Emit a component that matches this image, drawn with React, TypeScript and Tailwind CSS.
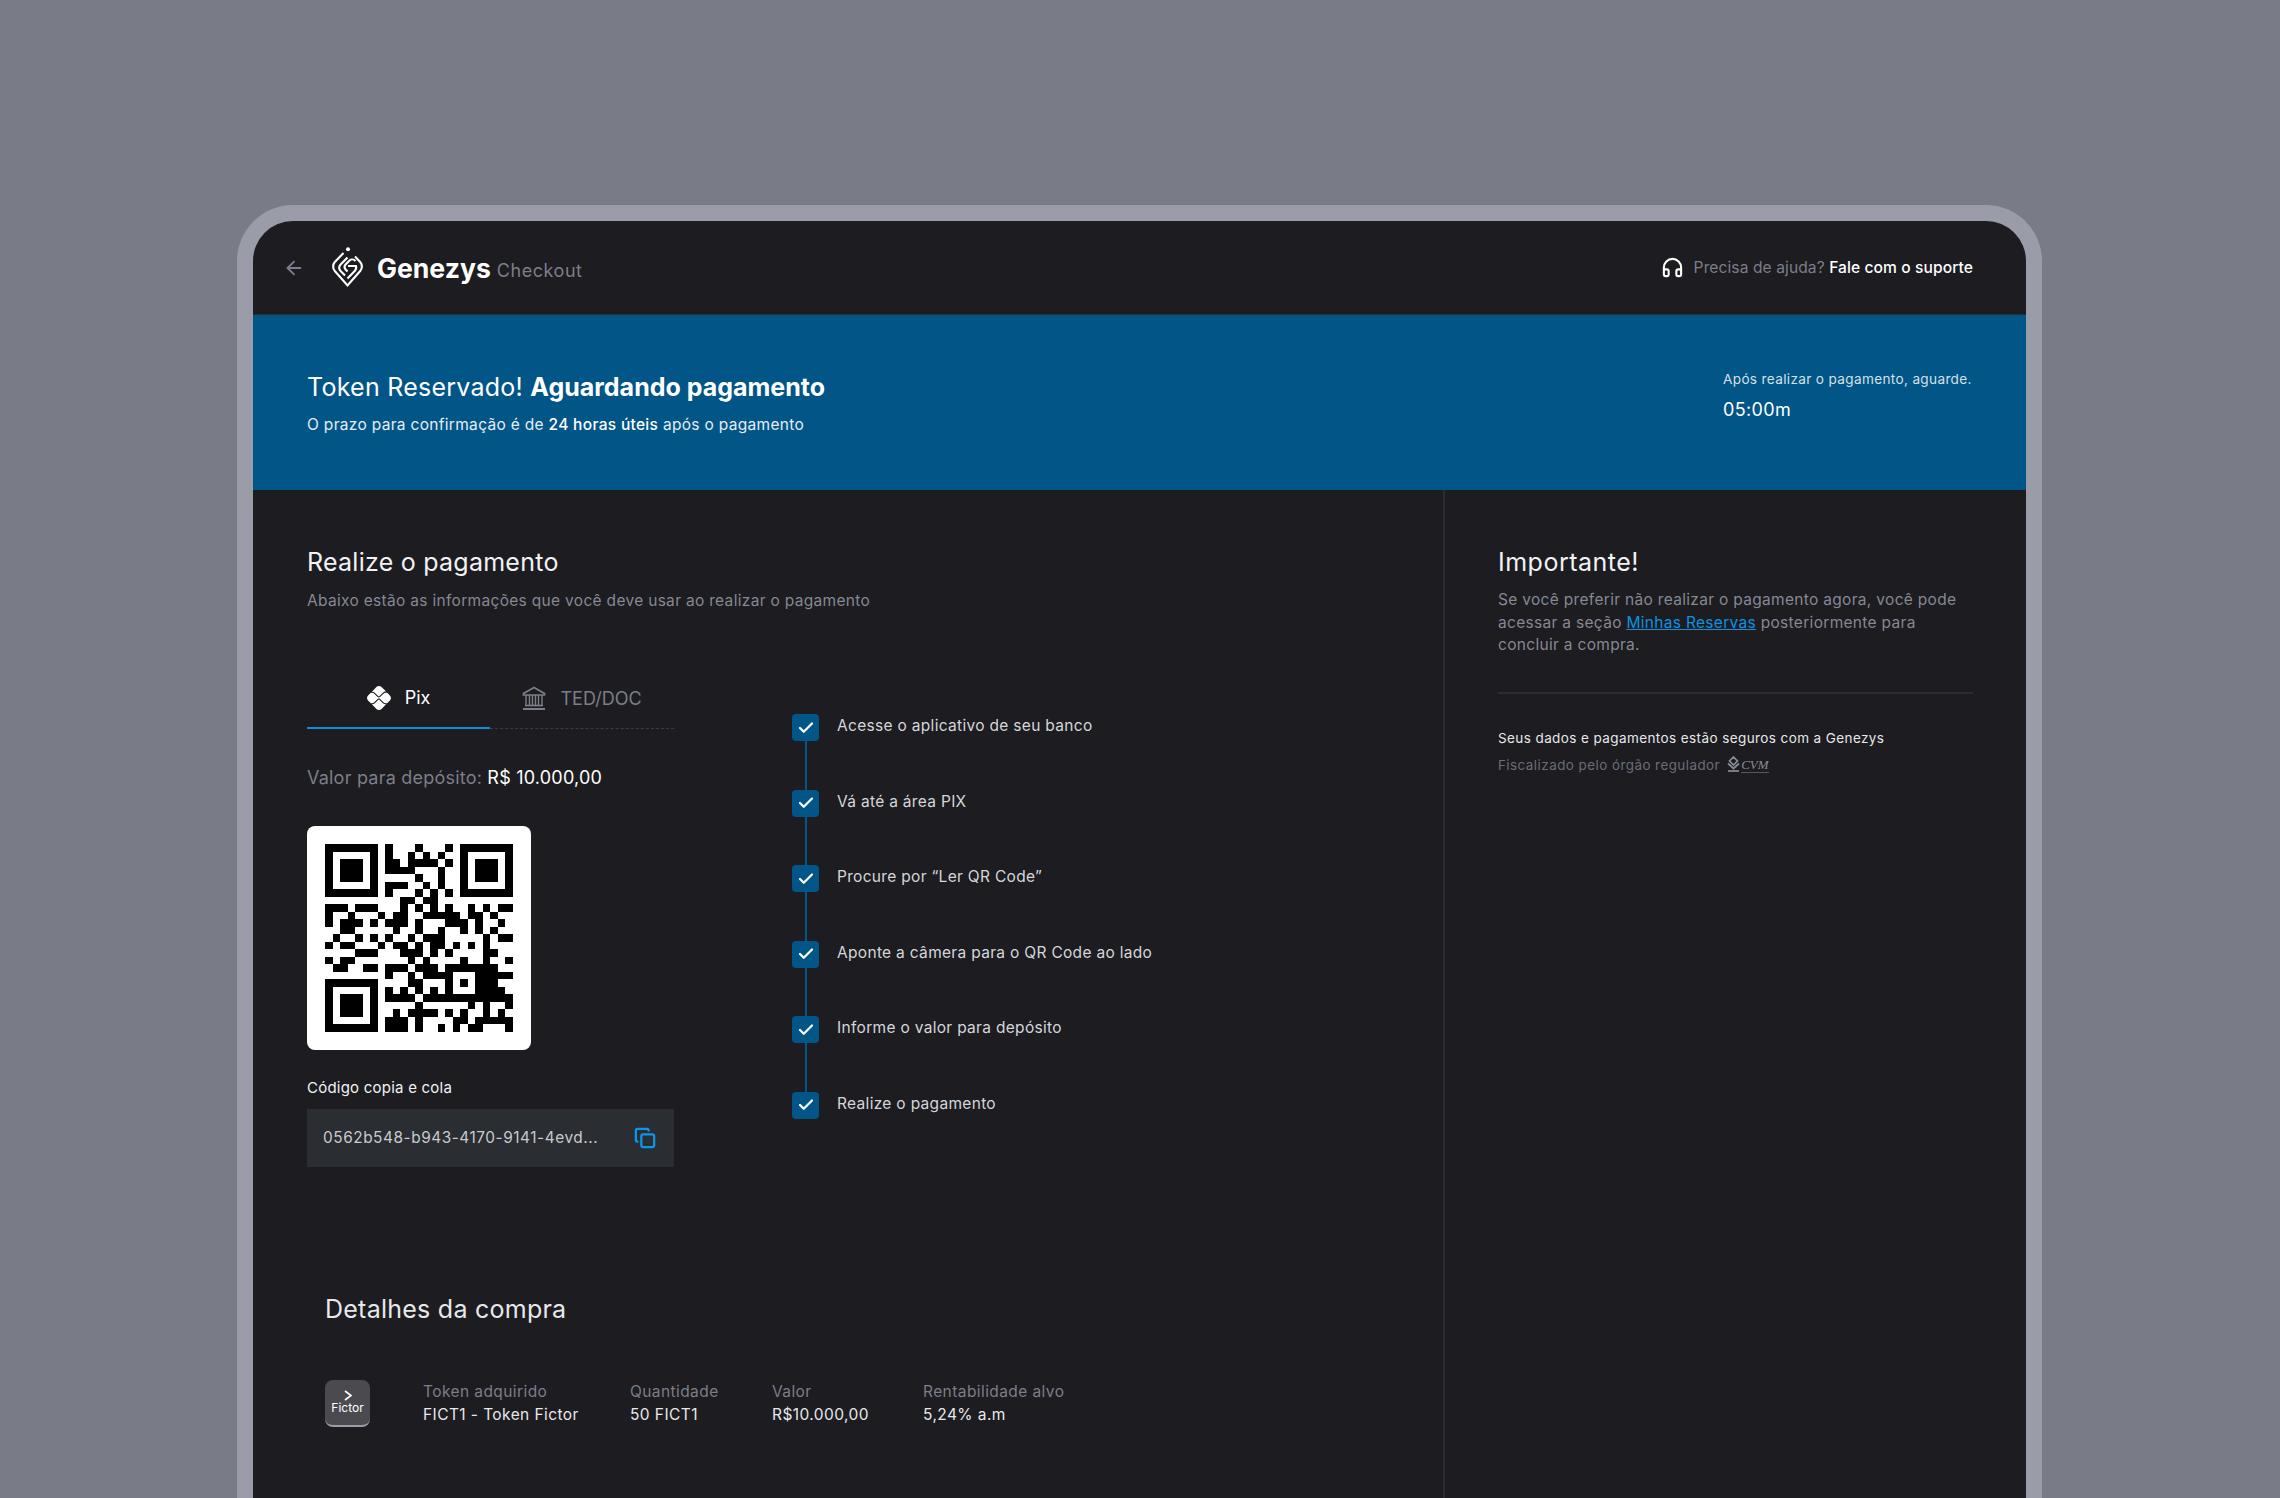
import { ArrowLeft, Check, Copy, Headphones } from "lucide-react";
import { FaPix } from "react-icons/fa6";

const qrRows = [
  "1111111010001000101111111",
  "1000001010010101001000001",
  "1011101011011110101011101",
  "1011101011110001001011101",
  "1011101000001001001011101",
  "1000001011100101001000001",
  "1111111010001010101111111",
  "0000000000110110000000000",
  "1110111000101010100101011",
  "1001000101100111110110100",
  "1011101011101000111010010",
  "0011000001001001001010100",
  "0100101010010111000001011",
  "1011000101101011010101000",
  "0000111000111010100001100",
  "1011000000010100001001001",
  "0110011011101110111111100",
  "0000000010010111100011111",
  "1111111000011000101011100",
  "1000001010101010100011110",
  "1011101011110111111111111",
  "1011101000001000000101001",
  "1011101001011110101001010",
  "1000001011101000011011111",
  "1111111011101001010110001",
];

const steps = [
  "Acesse o aplicativo de seu banco",
  "Vá até a área PIX",
  "Procure por “Ler QR Code”",
  "Aponte a câmera para o QR Code ao lado",
  "Informe o valor para depósito",
  "Realize o pagamento",
];

const details = [
  { label: "Token adquirido", value: "FICT1 - Token Fictor", w: "w-[207px]" },
  { label: "Quantidade", value: "50 FICT1", w: "w-[142px]" },
  { label: "Valor", value: "R$10.000,00", w: "w-[151px]" },
  { label: "Rentabilidade alvo", value: "5,24% a.m", w: "w-[160px]" },
];

function Logo() {
  return (
    <svg width="31" height="41" viewBox="0 0 31 41" fill="none" stroke="white" strokeWidth="2.1">
      <circle cx="16" cy="2.2" r="2" fill="white" stroke="none" />
      <path d="M11.5 6 L2.8 15 C0.6 17.5 0.6 21.5 2.8 24 L15.5 38.5 L28.2 24 C30.4 21.5 30.4 17.5 28.2 15 L23 9.5" />
      <path d="M15.5 10.5 L8.6 17.5 C6.8 19.5 6.8 22 8.6 24 L13 28.5" />
      <path d="M23.5 14 C21.5 12 19 12 17.5 13.5 L13.6 17.5 C12.2 19.1 12.2 20.9 13.6 22.5 L15.5 24.5" />
      <path d="M16 19 H24 C24.5 21 24 22.7 22.7 24 L15.5 31.5" />
    </svg>
  );
}

function BankIcon() {
  return (
    <svg width="24" height="24" viewBox="0 0 24 24" fill="none" stroke="#7c7e89" strokeWidth="1.7">
      <path d="M1.5 7.5 L12 1.5 L22.5 7.5 V9 H1.5 Z" />
      <path d="M4 19 V9 M7.5 19 V9 M10.5 19 V9 M13.5 19 V9 M16.5 19 V9 M20 19 V9" strokeWidth="1.4" />
      <path d="M3 19.5 H21" />
      <path d="M1 23 H23" strokeWidth="2" />
    </svg>
  );
}

function CvmLogo() {
  return (
    <span className="flex items-start gap-[1px] text-[#8a8c96]">
      <svg width="13" height="17" viewBox="0 0 13 17" fill="none" stroke="#8a8c96" strokeWidth="1.7">
        <path d="M6.5 1 L10.5 5 L6.5 9 L2.5 5 Z" />
        <path d="M1 7.5 L6.5 12.5 L12 7.5" />
        <path d="M1 15 H12" />
      </svg>
      <span className="flex flex-col">
        <span className="mt-[3px] [font-family:'Liberation_Serif',serif] text-[13px] leading-[12px] tracking-normal italic">CVM</span>
        <span className="mt-[1px] h-[1px] bg-[#55575f]" />
      </span>
    </span>
  );
}

export default function App() {
  return (
    <div className="h-[1498px] overflow-hidden bg-[#797b86] pt-[205px] pl-[237px] [font-family:Inter,sans-serif]">
      <div className="h-[1293px] w-[1805px] rounded-t-[56px] border-x-[16px] border-t-[16px] border-[#9a9ca8] bg-[#1c1c21]">
        <div className="h-[1277px] overflow-hidden rounded-t-[40px]">
          <header className="flex h-[94px] items-center justify-between border-b border-[#2a2d31] pr-[53px] pl-[30px]">
            <div className="flex items-center">
              <ArrowLeft className="h-[22px] w-[22px] text-[#7c7e89]" strokeWidth={2} />
              <div className="ml-[27px]">
                <Logo />
              </div>
              <span className="mt-[2px] ml-[14px] text-[26.6px] leading-none font-bold text-white">Genezys</span>
              <span className="mt-[7px] ml-[6px] text-[18px] leading-none tracking-[0.03em] text-[#7c7e89]">Checkout</span>
            </div>
            <div className="flex items-center text-[15.6px] tracking-[0.005em]">
              <Headphones className="mr-[10px] h-[23px] w-[23px] text-white" strokeWidth={2.2} />
              <span className="text-[#7c7e89]">Precisa de ajuda?&nbsp;</span>
              <span className="font-medium text-white">Fale com o suporte</span>
            </div>
          </header>

          <section className="flex h-[175px] items-start justify-between bg-[#015587] pt-[56px] pr-[53px] pl-[54px] text-white">
            <div>
              <h1 className="text-[25px] leading-[32px] tracking-[0.01em]">
                Token Reservado! <b className="font-bold tracking-normal">Aguardando pagamento</b>
              </h1>
              <p className="mt-[12px] text-[15.5px] leading-[20px] tracking-[0.02em] text-[#e6edf2]">
                O prazo para confirmação é de <span className="font-medium text-white">24 horas úteis</span> após o pagamento
              </p>
            </div>
            <div className="-mt-[1px] w-[250px]">
              <p className="text-[13.6px] leading-[18px] tracking-[0.025em] whitespace-nowrap text-[#d6e0e8]">Após realizar o pagamento, aguarde.</p>
              <p className="mt-[10px] text-[18px] leading-[24px] tracking-[0.02em]">05:00m</p>
            </div>
          </section>

          <main className="flex h-[1008px]">
            <div className="w-[1192px] border-r-2 border-[#2a2d31] pt-[55px] pl-[54px]">
              <h2 className="text-[25px] leading-[34px] tracking-[0.01em] text-[#f2f2f4]">Realize o pagamento</h2>
              <p className="mt-[12px] text-[15.5px] leading-[20px] tracking-[0.02em] text-[#868892]">
                Abaixo estão as informações que você deve usar ao realizar o pagamento
              </p>

              <div className="mt-[59px] flex">
                <div className="w-[367px]">
                  <div className="flex h-[59px] text-[18px]">
                    <div className="flex w-[183px] items-center justify-center gap-[14px] border-b-2 border-[#0c8fd8] pb-[2px] text-white">
                      <FaPix className="h-[24px] w-[24px]" />
                      Pix
                    </div>
                    <div className="flex w-[184px] items-center justify-center gap-[14px] border-b border-dashed border-[#3a3c42] pb-[2px] text-[#7c7e89]">
                      <BankIcon />
                      TED/DOC
                    </div>
                  </div>
                  <p className="mt-[35px] text-[18px] leading-[28px] tracking-[0.012em] text-[#7c7e89]">
                    Valor para depósito: <span className="text-white">R$ 10.000,00</span>
                  </p>
                  <div className="mt-[34px] h-[224px] w-[224px] rounded-[8px] bg-white p-[18px]">
                    <svg width="188" height="188" viewBox="0 0 25 25" shapeRendering="crispEdges">
                      {qrRows.map((row, y) =>
                        row.split("").map((cell, x) =>
                          cell === "1" ? <rect key={x + "-" + y} x={x} y={y} width="1" height="1" fill="#000" /> : null
                        )
                      )}
                    </svg>
                  </div>
                  <p className="mt-[27px] text-[15px] leading-[22px] tracking-[0.015em] text-[#f2f2f4]">Código copia e cola</p>
                  <div className="mt-[10px] flex h-[58px] items-center justify-between bg-[#2a2d31] pr-[18px] pl-[16px]">
                    <span className="text-[15.4px] tracking-[0.035em] text-[#c9cad0]">0562b548-b943-4170-9141-4evd...</span>
                    <Copy className="h-[22px] w-[22px] text-[#0c97e6]" strokeWidth={2.5} />
                  </div>
                </div>

                <ol className="mt-[44px] ml-[118px]">
                  {steps.map((step, i) => (
                    <li key={step} className="flex h-[75.6px] gap-[18px]">
                      <div className="flex w-[27px] flex-col items-center">
                        <div className="flex h-[27px] w-[27px] shrink-0 items-center justify-center rounded-[4px] bg-[#015587]">
                          <Check className="h-[18px] w-[18px] text-white" strokeWidth={3} />
                        </div>
                        {i < steps.length - 1 && <div className="w-[2px] flex-1 bg-[#015587]" />}
                      </div>
                      <span className="mt-[1px] text-[15.5px] leading-[22px] tracking-[0.02em] text-[#d5d6da]">{step}</span>
                    </li>
                  ))}
                </ol>
              </div>

              <h2 className="mt-[124px] ml-[18px] text-[25px] leading-[34px] tracking-[0.01em] text-[#e8e8ea]">Detalhes da compra</h2>
              <div className="mt-[54px] ml-[18px] flex items-center">
                <div className="flex h-[47px] w-[45px] flex-col items-center justify-center rounded-[8px] border-b-2 border-[#9a9ca8] bg-[#4a4a50] text-white">
                  <svg width="10" height="11" viewBox="0 0 10 11" fill="none" stroke="white" strokeWidth="1.6">
                    <path d="M2 1 L8 5.5 L2 10" />
                  </svg>
                  <span className="text-[12px] leading-[13px]">Fictor</span>
                </div>
                <div className="ml-[53px] flex">
                  {details.map((d) => (
                    <div key={d.label} className={d.w}>
                      <p className="text-[15.5px] leading-[22px] tracking-[0.027em] text-[#7c7e89]">{d.label}</p>
                      <p className="mt-[1px] text-[15.5px] leading-[22px] tracking-[0.027em] text-[#e8e8ea]">{d.value}</p>
                    </div>
                  ))}
                </div>
              </div>
            </div>

            <aside className="flex-1 pt-[55px] pr-[53px] pl-[53px]">
              <h2 className="text-[25px] leading-[34px] tracking-[0.02em] text-[#f2f2f4]">Importante!</h2>
              <p className="mt-[10px] text-[15.5px] leading-[22.5px] tracking-[0.02em] text-[#868892]">
                Se você preferir não realizar o pagamento agora, você pode acessar a seção{" "}
                <a className="text-[#0b93e0] underline">Minhas Reservas</a> posteriormente para concluir a compra.
              </p>
              <div className="mt-[35px] h-[2px] bg-[#2a2d31]" />
              <p className="mt-[34px] text-[13.5px] leading-[20px] tracking-[0.03em] text-[#e8e8ea]">
                Seus dados e pagamentos estão seguros com a Genezys
              </p>
              <div className="mt-[7px] flex items-center gap-[7px] text-[13.4px] leading-[20px] tracking-[0.035em] text-[#6b6d78]">
                Fiscalizado pelo órgão regulador
                <CvmLogo />
              </div>
            </aside>
          </main>
        </div>
      </div>
    </div>
  );
}
